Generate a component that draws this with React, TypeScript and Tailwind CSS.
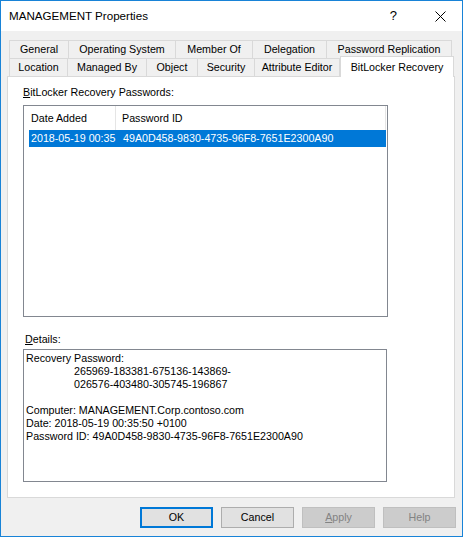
import React from "react";

const row1 = [
  { label: "General", w: "w-[60px]" },
  { label: "Operating System", w: "w-[107px]" },
  { label: "Member Of", w: "w-[77px]" },
  { label: "Delegation", w: "w-[74px]" },
  { label: "Password Replication", w: "w-[125px]" },
];

const row2 = [
  { label: "Location", w: "w-[59px]" },
  { label: "Managed By", w: "w-[79px]" },
  { label: "Object", w: "w-[51px]" },
  { label: "Security", w: "w-[57px]" },
  { label: "Attribute Editor", w: "w-[85px]" },
];

function Tab({ label, w, first }: { label: string; w: string; first?: boolean }) {
  return (
    <div
      className={`${w} h-[18px] flex items-center justify-center whitespace-nowrap bg-[#f0f0f0] border-t border-r border-[#d9d9d9] ${
        first ? "border-l" : ""
      }`}
    >
      {label}
    </div>
  );
}

export default function App() {
  return (
    <div
      className="w-[463px] h-[537px] border border-[#1883d7] flex flex-col bg-[#f0f0f0] text-black text-[10.7px]"
      style={{ fontFamily: '"Liberation Sans", Arial, sans-serif' }}
    >
      {/* title bar */}
      <div className="h-[30px] bg-white flex items-center shrink-0">
        <span className="ml-[8px] text-[11.6px] flex-1">MANAGEMENT Properties</span>
        <span className="text-[13px] mr-[38px]">?</span>
        <svg width="11" height="11" viewBox="0 0 11 11" className="mr-[16px]">
          <path d="M0.5 0.5 L10.5 10.5 M10.5 0.5 L0.5 10.5" stroke="#000" strokeWidth="1" />
        </svg>
      </div>

      <div className="flex-1 flex flex-col pt-[9px] px-[6px]">
        {/* tabs */}
        <div className="flex ml-[2px]">
          {row1.map((t, i) => (
            <Tab key={t.label} label={t.label} w={t.w} first={i === 0} />
          ))}
        </div>
        <div className="flex ml-[2px] items-end h-[18px]">
          {row2.map((t, i) => (
            <Tab key={t.label} label={t.label} w={t.w} first={i === 0} />
          ))}
          <div className="w-[114px] h-[21px] -mb-px relative z-10 flex items-start justify-center whitespace-nowrap pt-[2px] bg-white border-t border-l border-r border-[#d9d9d9]">
            BitLocker Recovery
          </div>
        </div>

        {/* panel */}
        <div className="w-[448px] h-[422px] bg-white border border-[#d9d9d9] flex flex-col pl-[15px] pt-[9px]">
          <div className="h-[13px] leading-[13px]">
            <span className="underline">B</span>itLocker Recovery Passwords:
          </div>
          <div className="mt-[6px] w-[365px] h-[212px] border border-[#828790] flex flex-col">
            <div className="h-[24px] flex items-center">
              <div className="w-[92px] h-full flex items-center pl-[7px] border-r border-[#e5e5e5]">
                Date Added
              </div>
              <div className="flex-1 h-full flex items-center pl-[6px]">Password ID</div>
              <div className="w-px h-full bg-[#e5e5e5] mr-px" />
            </div>
            <div className="h-[17px] ml-[5px] mr-px bg-[#0078d7] text-white flex items-center whitespace-nowrap">
              <span className="w-[87px] shrink-0 pl-[2px]">2018-05-19 00:35</span>
              <span className="pl-[7px]">49A0D458-9830-4735-96F8-7651E2300A90</span>
            </div>
          </div>

          <div className="mt-[16px] ml-[2px] h-[13px] leading-[13px]">
            <span className="underline">D</span>etails:
          </div>
          <div className="mt-[3px] w-[364px] h-[133px] border border-[#828790] pl-[2px] pt-[2px] leading-[13px]">
            <div>Recovery Password:</div>
            <div className="pl-[48px]">265969-183381-675136-143869-</div>
            <div className="pl-[48px]">026576-403480-305745-196867</div>
            <div className="h-[13px]" />
            <div>Computer: MANAGEMENT.Corp.contoso.com</div>
            <div>Date: 2018-05-19 00:35:50 +0100</div>
            <div>Password ID: 49A0D458-9830-4735-96F8-7651E2300A90</div>
          </div>
        </div>

        {/* buttons */}
        <div className="flex justify-end gap-[8px] mt-[9px]">
          <button className="w-[73px] h-[21px] bg-[#e1e1e1] border-2 border-[#0078d7] flex items-center justify-center">
            OK
          </button>
          <button className="w-[73px] h-[21px] bg-[#e1e1e1] border border-[#adadad] flex items-center justify-center">
            Cancel
          </button>
          <button className="w-[73px] h-[21px] bg-[#cccccc] border border-[#bfbfbf] text-[#838383] flex items-center justify-center">
            <span className="underline">A</span>pply
          </button>
          <button className="w-[73px] h-[21px] bg-[#cccccc] border border-[#bfbfbf] text-[#838383] flex items-center justify-center">
            Help
          </button>
        </div>
      </div>
    </div>
  );
}
